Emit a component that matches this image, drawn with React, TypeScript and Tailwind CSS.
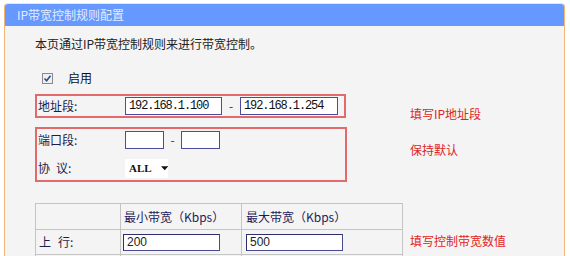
import React from "react";

const cjk = { fontFamily: '"Noto Sans CJK SC", "Liberation Sans", sans-serif' };
const mono = { fontFamily: '"Liberation Mono", monospace' };

function TextBox({ w, value }: { w: string; value?: string }) {
  return (
    <div
      className={`${w} h-[18px] bg-white border border-[#4c4c9e] flex items-center pl-[3px] text-[12px] tracking-[-1.1px] text-[#111]`}
      style={mono}
    >
      {value}
    </div>
  );
}

function NumBox({ value }: { value: string }) {
  return (
    <div
      className="w-[97px] h-[17px] bg-white border border-[#4a4a90] border-t-[#2e2e6e] border-l-[#2e2e6e] flex items-center pl-[3px] text-[12px] text-[#222]"
      style={{ fontFamily: '"Liberation Sans", Arial, sans-serif' }}
    >
      {value}
    </div>
  );
}

export default function App() {
  return (
    <div className="w-[570px] h-[256px] bg-white overflow-hidden pt-[3px] pl-[4px]" style={cjk}>
      <div className="w-[561px] h-[270px] border-x border-t border-[#f2b774] border-t-[#dfe6f5] rounded-t-[4px] bg-[#f4f4f4] overflow-hidden">
        <div className="h-[22px] bg-[#6699ff] text-[#e4ebff] text-[12px] leading-[22px] pl-[12px]">
          IP带宽控制规则配置
        </div>
        <div className="pl-[30px]">
          <div className="mt-[10px] text-[12px] leading-[16px] text-[#222]">
            本页通过IP带宽控制规则来进行带宽控制。
          </div>
          <div className="mt-[18px] h-[16px] flex items-center">
            <div className="ml-[7px] w-[11px] h-[11px] border border-[#8a8a8a] bg-[#f0f0f0] flex items-center justify-center">
              <svg width="9" height="9" viewBox="0 0 9 9">
                <path d="M1.5 4.5 L3.6 6.8 L7.5 1.8" fill="none" stroke="#2a4a9a" strokeWidth="1.6" />
              </svg>
            </div>
            <span className="ml-[15px] text-[12px] leading-[16px] text-[#111]">启用</span>
          </div>

          <div className="mt-[8px] flex items-start">
            <div className="w-[311px] h-[24px] border-2 border-[#e36a6a] flex items-center">
              <div className="w-[88px] pl-[1px] text-[12px] text-[#1c1c4c]">地址段:</div>
              <TextBox w="w-[97px]" value="192.168.1.100" />
              <div className="w-[18px] text-center text-[12px] text-[#333]">-</div>
              <TextBox w="w-[98px]" value="192.168.1.254" />
            </div>
            <div className="ml-[64px] mt-[12px] text-[12px] leading-[16px] text-[#e02424]">填写IP地址段</div>
          </div>

          <div className="mt-[5px] flex items-start">
            <div className="w-[312px] h-[55px] border-2 border-[#e36a6a] flex flex-col pt-[1px]">
              <div className="h-[20px] flex items-center">
                <div className="w-[88px] pl-[1px] text-[12px] text-[#1c1c4c]">端口段:</div>
                <TextBox w="w-[39px]" />
                <div className="w-[17px] text-center text-[12px] text-[#333]">-</div>
                <TextBox w="w-[39px]" />
              </div>
              <div className="mt-[8px] h-[20px] flex items-center">
                <div className="w-[88px] pl-[1px] text-[12px] text-[#1c1c4c] flex">
                  <span>协</span>
                  <span className="ml-[6px]">议:</span>
                </div>
                <div className="w-[43px] h-[19px] bg-white flex items-center pl-[4px] text-[11px] text-[#111]" style={{ fontFamily: '"Liberation Serif", serif' }}>
                  <span className="font-bold">ALL</span>
                  <svg className="ml-[9px]" width="8" height="5" viewBox="0 0 8 5">
                    <path d="M0 0 L8 0 L4 4.5 Z" fill="#111" />
                  </svg>
                </div>
              </div>
            </div>
            <div className="ml-[63px] mt-[15px] text-[12px] leading-[16px] text-[#e02424]">保持默认</div>
          </div>

          <div className="mt-[21px] flex items-start">
            <table className="table-fixed border-collapse w-[367px] text-[12px]">
              <colgroup>
                <col className="w-[85px]" />
                <col className="w-[121px]" />
                <col className="w-[161px]" />
              </colgroup>
              <tbody>
                <tr className="h-[26px]">
                  <td className="border border-[#c4c4c4]"></td>
                  <td className="border border-[#c4c4c4] pl-[3px] text-[#1c1c5c]">最小带宽（Kbps）</td>
                  <td className="border border-[#c4c4c4] pl-[4px] text-[#1c1c5c]">最大带宽（Kbps）</td>
                </tr>
                <tr className="h-[25px]">
                  <td className="border border-[#c4c4c4] pl-[3px] text-[#1c1c4c]">
                    <span>上</span>
                    <span className="ml-[7px]">行:</span>
                  </td>
                  <td className="border border-[#c4c4c4] pl-[2px]">
                    <NumBox value="200" />
                  </td>
                  <td className="border border-[#c4c4c4] pl-[4px]">
                    <NumBox value="500" />
                  </td>
                </tr>
                <tr className="h-[25px]">
                  <td className="border border-[#c4c4c4]"></td>
                  <td className="border border-[#c4c4c4]"></td>
                  <td className="border border-[#c4c4c4]"></td>
                </tr>
              </tbody>
            </table>
            <div className="ml-[7px] mt-[30px] text-[12px] leading-[16px] text-[#e02424]">填写控制带宽数值</div>
          </div>
        </div>
      </div>
    </div>
  );
}
